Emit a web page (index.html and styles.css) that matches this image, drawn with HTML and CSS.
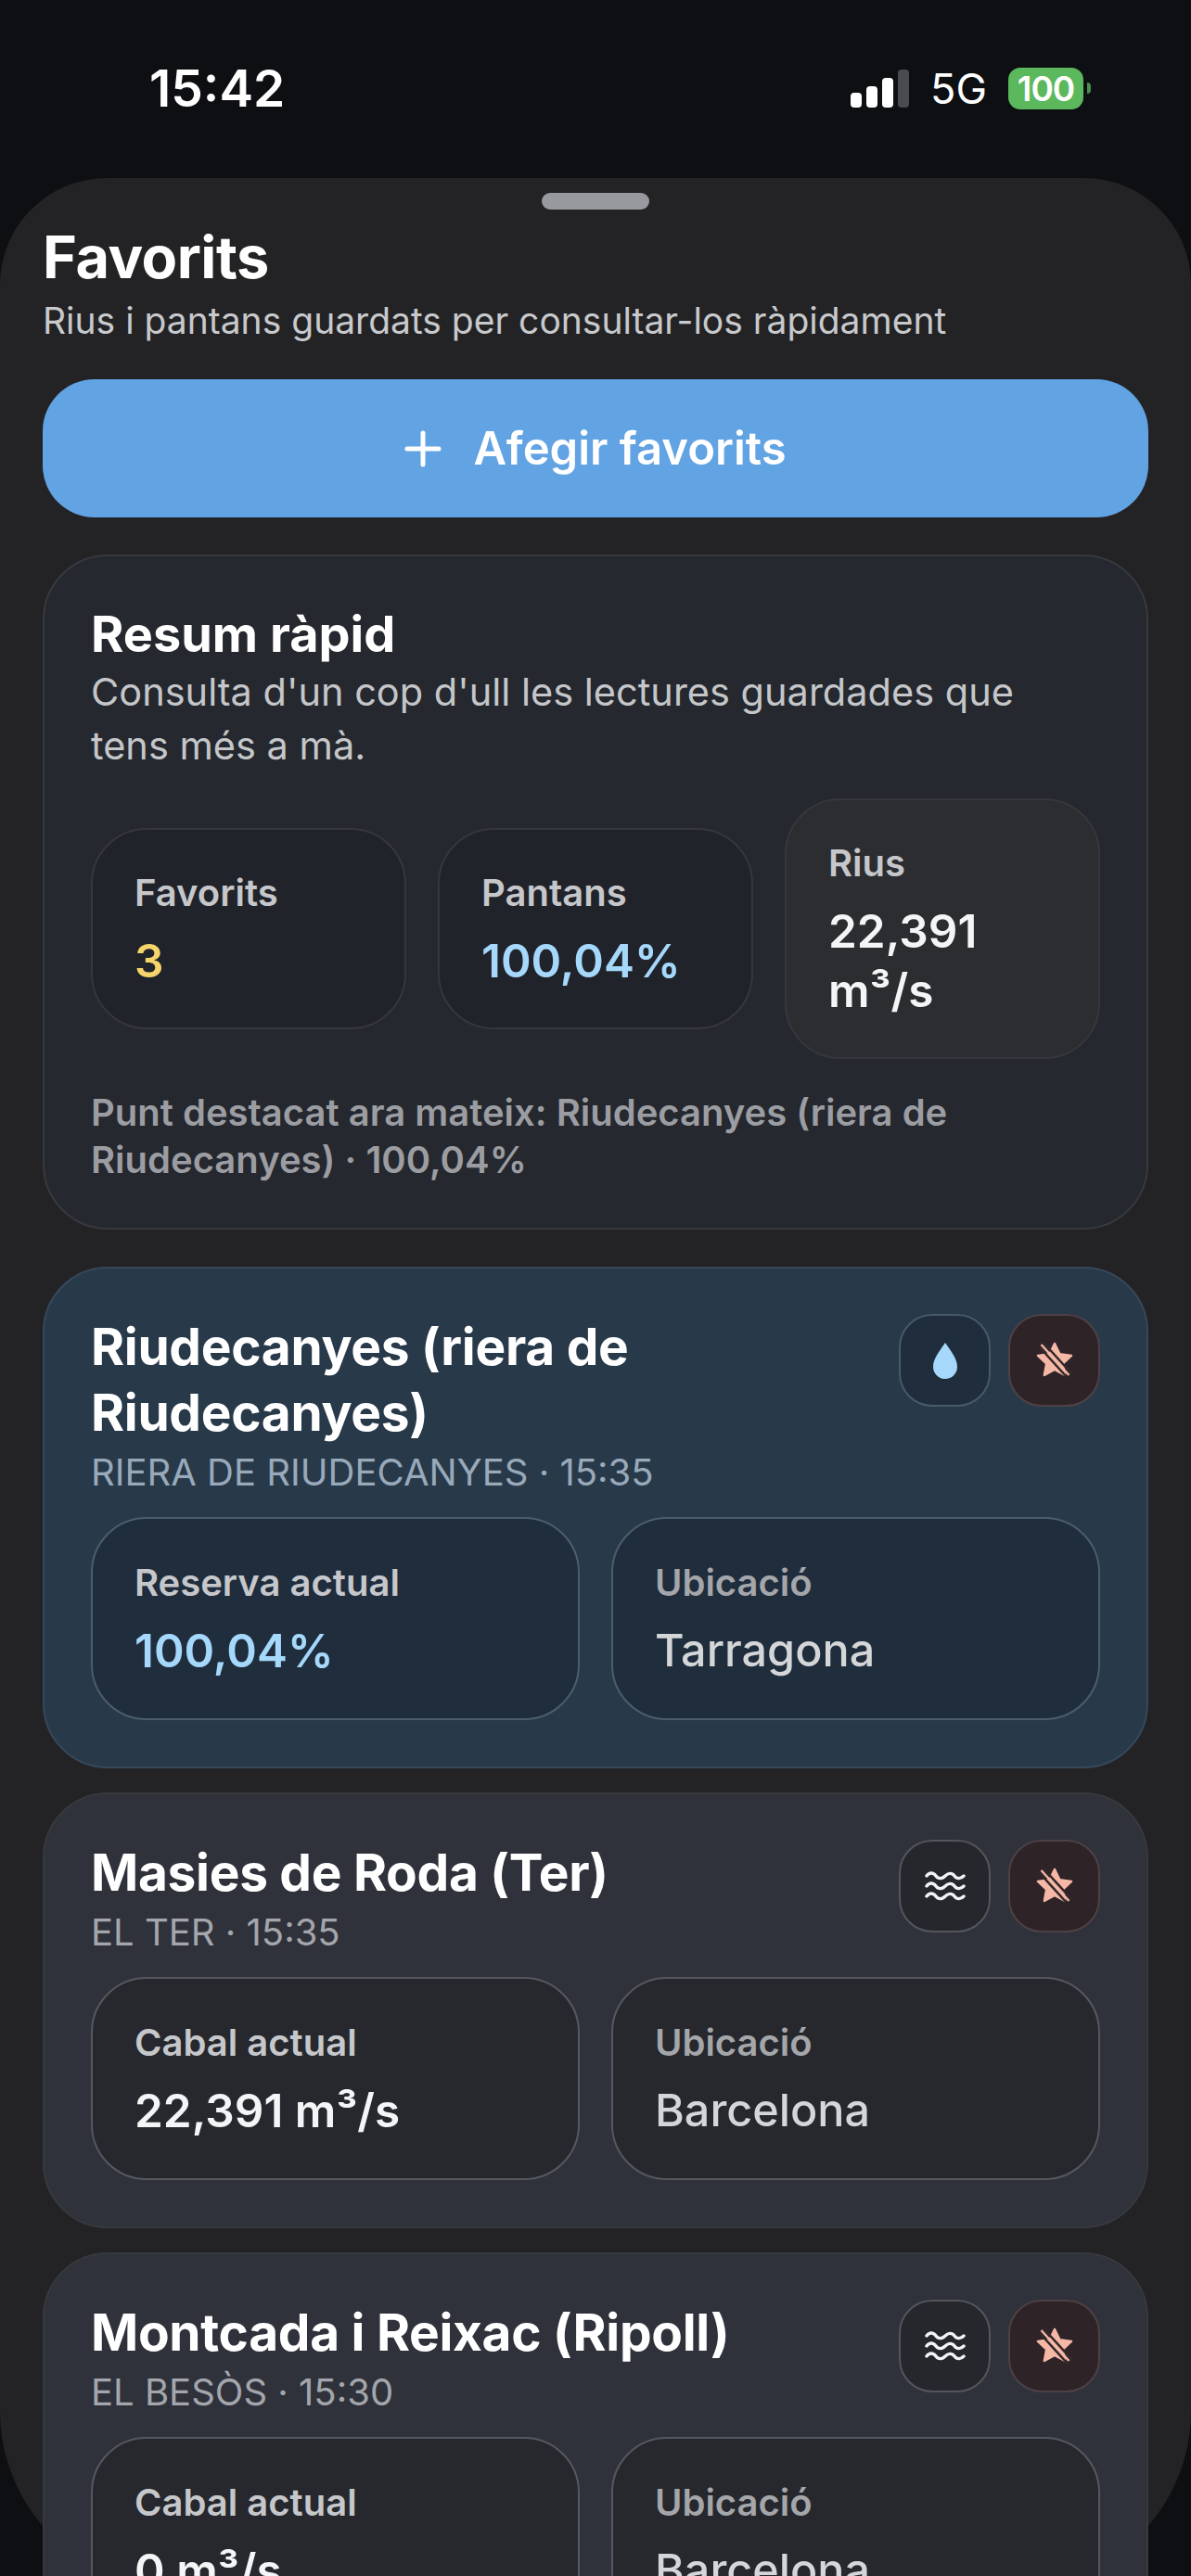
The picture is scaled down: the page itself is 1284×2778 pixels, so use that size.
FILE: index.html
```html
<!DOCTYPE html>
<html lang="ca">
<head>
    <meta charset="UTF-8">
    <meta name="viewport" content="width=device-width, initial-scale=1.0">
    <title>Favorits</title>
    <link rel="stylesheet" href="styles.css">
</head>
<body>
    <svg class="icon-defs" width="0" height="0">
        <defs>
            <symbol id="star-off" viewBox="0 0 44 44">
                <path d="M22 4l5.400 11.200 12.600 1.700-9.200 8.700 2.300 12.400L22 32l-11.100 6 2.300-12.400-9.200-8.700 12.600-1.700z" fill="#f6b8a6" stroke="#f6b8a6" stroke-width="2.500" stroke-linejoin="round"/>
                <path d="M5 7l30 33M10 3l30 33" fill="none" stroke="#33282b" stroke-width="2.600"/>
                <path d="M7.500 5l30 33" fill="none" stroke="#f6b8a6" stroke-width="2.400"/>
            </symbol>
            <symbol id="waves" viewBox="0 0 44 36">
                <path d="M2 7c3-4 7-4 10 0s7 3 10 0 7-4 10 0 7 3 10 0" fill="none" stroke="#f2f3f5" stroke-width="3.400" stroke-linecap="round"/>
                <path d="M2 18c3-4 7-4 10 0s7 3 10 0 7-4 10 0 7 3 10 0" fill="none" stroke="#f2f3f5" stroke-width="3.400" stroke-linecap="round"/>
                <path d="M2 29c3-4 7-4 10 0s7 3 10 0 7-4 10 0 7 3 10 0" fill="none" stroke="#f2f3f5" stroke-width="3.400" stroke-linecap="round"/>
            </symbol>
        </defs>
    </svg>

    <div class="statusbar">
        <span class="clock">15:42</span>
        <div class="status-right">
            <div class="signal">
                <span class="bar bar1"></span>
                <span class="bar bar2"></span>
                <span class="bar bar3"></span>
                <span class="bar bar4"></span>
            </div>
            <span class="network">5G</span>
            <div class="battery"><span class="battery-level">100</span><span class="battery-tip"></span></div>
        </div>
    </div>

    <div class="sheet">
        <div class="handle"></div>
        <h1>Favorits</h1>
        <p class="subtitle">Rius i pantans guardats per consultar-los ràpidament</p>

        <button class="add-btn" type="button">
            <svg class="plus" viewBox="0 0 40 40" width="40" height="40"><path d="M20 3v34M3 20h34" stroke="#fff" stroke-width="5" stroke-linecap="round"/></svg>
            <span>Afegir favorits</span>
        </button>

        <section class="card summary">
            <h2>Resum ràpid</h2>
            <p class="summary-text">Consulta d'un cop d'ull les lectures guardades que tens més a mà.</p>
            <div class="stats">
                <div class="stat">
                    <div class="label">Favorits</div>
                    <div class="value yellow">3</div>
                </div>
                <div class="stat">
                    <div class="label">Pantans</div>
                    <div class="value blue">100,04%</div>
                </div>
                <div class="stat stat-alt">
                    <div class="label">Rius</div>
                    <div class="value">22,391 m³/s</div>
                </div>
            </div>
            <p class="highlight">Punt destacat ara mateix: Riudecanyes (riera de Riudecanyes) · 100,04%</p>
        </section>

        <section class="card fav fav-reservoir">
            <div class="fav-head">
                <div class="fav-title">
                    <h3>Riudecanyes (riera de Riudecanyes)</h3>
                    <div class="meta">RIERA DE RIUDECANYES · 15:35</div>
                </div>
                <div class="actions">
                    <div class="icon-btn">
                        <svg viewBox="0 0 30 42" width="30" height="42"><path d="M15 2c6 9 13 17 13 26a13 13 0 0 1-26 0C2 19 9 11 15 2z" fill="#a5d8fb"/></svg>
                    </div>
                    <div class="icon-btn icon-remove"><svg width="44" height="44"><use href="#star-off"/></svg></div>
                </div>
            </div>
            <div class="cells">
                <div class="cell">
                    <div class="label">Reserva actual</div>
                    <div class="value blue">100,04%</div>
                </div>
                <div class="cell">
                    <div class="label muted">Ubicació</div>
                    <div class="value soft">Tarragona</div>
                </div>
            </div>
        </section>

        <section class="card fav">
            <div class="fav-head">
                <div class="fav-title">
                    <h3>Masies de Roda (Ter)</h3>
                    <div class="meta">EL TER · 15:35</div>
                </div>
                <div class="actions">
                    <div class="icon-btn"><svg width="44" height="36"><use href="#waves"/></svg></div>
                    <div class="icon-btn icon-remove"><svg width="44" height="44"><use href="#star-off"/></svg></div>
                </div>
            </div>
            <div class="cells">
                <div class="cell">
                    <div class="label">Cabal actual</div>
                    <div class="value">22,391 m³/s</div>
                </div>
                <div class="cell">
                    <div class="label muted">Ubicació</div>
                    <div class="value soft">Barcelona</div>
                </div>
            </div>
        </section>

        <section class="card fav">
            <div class="fav-head">
                <div class="fav-title">
                    <h3>Montcada i Reixac (Ripoll)</h3>
                    <div class="meta">EL BESÒS · 15:30</div>
                </div>
                <div class="actions">
                    <div class="icon-btn"><svg width="44" height="36"><use href="#waves"/></svg></div>
                    <div class="icon-btn icon-remove"><svg width="44" height="44"><use href="#star-off"/></svg></div>
                </div>
            </div>
            <div class="cells">
                <div class="cell">
                    <div class="label">Cabal actual</div>
                    <div class="value">0 m³/s</div>
                </div>
                <div class="cell">
                    <div class="label muted">Ubicació</div>
                    <div class="value soft">Barcelona</div>
                </div>
            </div>
        </section>
    </div>
</body>
</html>
```

FILE: styles.css
```css
html, body {
    margin: 0;
    padding: 0;
    height: 2778px;
    overflow: hidden;
}

body {
    background: #0e0f13;
    color: #fff;
    font-family: 'Inter', 'Liberation Sans', sans-serif;
}

.icon-defs {
    display: block;
    height: 0;
}

h1, h2, h3, p {
    margin: 0;
}

.statusbar {
    height: 192px;
    display: flex;
    justify-content: space-between;
    align-items: flex-start;
    padding: 0 108px 0 161px;
    box-sizing: border-box;
}

.clock {
    font-size: 55px;
    font-weight: 600;
    line-height: 64px;
    margin-top: 63px;
}

.status-right {
    display: flex;
    align-items: center;
    margin-top: 73px;
    height: 44px;
}

.signal {
    display: flex;
    align-items: flex-end;
    gap: 5px;
    height: 41px;
}

.bar {
    width: 12px;
    background: #fff;
    border-radius: 4px;
}

.bar1 { height: 16px; }
.bar2 { height: 23px; }
.bar3 { height: 32px; }
.bar4 { height: 41px; background: #4a4b4f; }

.network {
    font-size: 45px;
    font-weight: 400;
    margin-left: 23px;
}

.battery {
    display: flex;
    align-items: center;
    margin-left: 23px;
}

.battery-level {
    width: 81px;
    height: 45px;
    line-height: 45px;
    background: #5cb85c;
    border-radius: 13px;
    text-align: center;
    font-size: 37px;
    font-weight: 600;
    letter-spacing: -1px;
}

.battery-tip {
    width: 4px;
    height: 12px;
    margin-left: 4px;
    background: #4c8f4c;
    border-radius: 0 4px 4px 0;
}

.sheet {
    height: 2598px;
    background: #232325;
    border-radius: 115px 115px 190px 190px;
    padding: 16px 46px 0;
    box-sizing: border-box;
}

.handle {
    width: 116px;
    height: 18px;
    margin: 0 auto;
    background: #98989f;
    border-radius: 9px;
}

h1 {
    font-size: 63px;
    font-weight: 700;
    line-height: 72px;
    margin-top: 15px;
    letter-spacing: -0.5px;
}

.subtitle {
    font-size: 39px;
    line-height: 50px;
    color: #c8c9cc;
    margin-top: 8px;
}

.add-btn {
    display: flex;
    align-items: center;
    justify-content: center;
    gap: 34px;
    width: 100%;
    height: 149px;
    margin-top: 38px;
    background: #62a3e3;
    border: none;
    border-radius: 56px;
    color: #fff;
    font-family: inherit;
    font-size: 49px;
    font-weight: 600;
}

.card {
    border: 2px solid #37393e;
    border-radius: 70px;
    box-sizing: border-box;
    padding: 49px 50px 50px;
}

.summary {
    margin-top: 40px;
    padding-top: 54px;
    padding-bottom: 48px;
    background: #25282e;
}

h2 {
    font-size: 54px;
    font-weight: 700;
    line-height: 60px;
}

.summary-text {
    font-size: 41.500px;
    line-height: 58px;
    color: #c4c6c9;
    margin-top: 3px;
}

.stats {
    display: flex;
    align-items: center;
    gap: 34px;
    margin-top: 28px;
}

.stat {
    flex: 1;
    min-width: 0;
    background: #20232a;
    border: 2px solid #35373d;
    border-radius: 60px;
    box-sizing: border-box;
    padding: 42px 45px 40px;
}

.stat-alt {
    background: #2b2d31;
}

.label {
    font-size: 40px;
    font-weight: 600;
    line-height: 52px;
    color: #c6c7ca;
}

.label.muted {
    color: #a4a6aa;
}

.value {
    font-size: 49.500px;
    font-weight: 600;
    line-height: 64px;
    margin-top: 15px;
    color: #f4f5f6;
}

.value.soft {
    color: #d4d6d8;
    font-size: 48.500px;
    font-weight: 500;
}

.value.yellow { color: #f5d56b; }
.value.blue { color: #a5d8fb; }

.highlight {
    font-size: 40px;
    font-weight: 600;
    line-height: 51px;
    color: #9b9da2;
    margin-top: 32px;
}

.fav {
    margin-top: 26px;
    background: #2f323a;
}

.fav-reservoir {
    margin-top: 40px;
    background: #28394a;
    border-color: #36485a;
}

.fav-reservoir .meta {
    color: #98a9ba;
}

.fav-head {
    display: flex;
    justify-content: space-between;
    align-items: flex-start;
}

.fav-title {
    flex: 1;
    min-width: 0;
    padding-right: 40px;
}

h3 {
    font-size: 55px;
    font-weight: 700;
    line-height: 71px;
    letter-spacing: -0.3px;
}

.meta {
    font-size: 40px;
    line-height: 50px;
    color: #a3a6ac;
    margin-top: 4px;
}

.actions {
    display: flex;
    gap: 19px;
}

.icon-btn {
    width: 99px;
    height: 100px;
    background: #25272d;
    border: 2px solid #53565c;
    border-radius: 36px;
    box-sizing: border-box;
    display: flex;
    align-items: center;
    justify-content: center;
}

.fav-reservoir .icon-btn {
    background: #1f2d3c;
    border-color: #48596b;
}

.icon-remove,
.fav-reservoir .icon-remove {
    background: #2e2428;
    border-color: #4e4145;
}

.cells {
    display: grid;
    grid-template-columns: 1fr 1fr;
    gap: 34px;
    margin-top: 23px;
}

.cell {
    background: #26282e;
    border: 2px solid #55585e;
    border-radius: 60px;
    box-sizing: border-box;
    padding: 43px 45px 41px;
}

.fav-reservoir .cell {
    background: #1f2d3d;
    border-color: #4c5d6e;
}
```
